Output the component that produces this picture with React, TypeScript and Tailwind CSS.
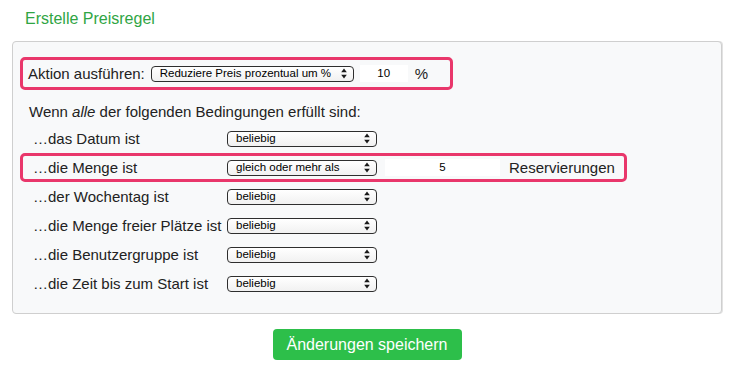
const Arrows = () => (
  <svg width="6" height="11" viewBox="0 0 6 11" className="shrink-0">
    <path d="M3 0.5 L5.8 4.3 H0.2 Z" fill="#1a1a1a" />
    <path d="M3 10.5 L5.8 6.7 H0.2 Z" fill="#1a1a1a" />
  </svg>
);

const SelectBox = ({ value, className = "" }: { value: string; className?: string }) => (
  <div
    className={`flex h-[16px] items-center justify-between rounded-[4px] border border-[#2e2e2e] bg-gradient-to-b from-white to-[#f1f1f1] pl-[8px] pr-[6px] text-[11.5px] leading-none text-black ${className}`}
  >
    <span>{value}</span>
    <Arrows />
  </div>
);

const conditions = [
  { label: "…das Datum ist", value: "beliebig" },
  { label: "…die Menge ist", value: "gleich oder mehr als", highlight: true },
  { label: "…der Wochentag ist", value: "beliebig" },
  { label: "…die Menge freier Plätze ist", value: "beliebig" },
  { label: "…die Benutzergruppe ist", value: "beliebig" },
  { label: "…die Zeit bis zum Start ist", value: "beliebig" },
];

export default function App() {
  return (
    <div
      className="min-h-[372px] w-[736px] bg-white pl-[12px] pr-[14px] text-[#222]"
      style={{ fontFamily: '"Liberation Sans", Arial, sans-serif' }}
    >
      <h1 className="pl-[13px] pt-[9px] text-[16px] leading-[20px] font-normal text-[#2fa544]">
        Erstelle Preisregel
      </h1>

      <div className="mt-[12px] rounded-[4px] border border-[#cfcfcf] bg-[#f8f9fa] px-[7px] pb-[15px] pt-[15px] shadow-[1px_0_0_#e2e2e2]">
        <div className="flex h-[33px] w-[433px] items-center rounded-[5px] border-[3px] border-[#e9376b] pl-[5px]">
          <span className="text-[15px] leading-none">Aktion ausführen:</span>
          <SelectBox value="Reduziere Preis prozentual um %" className="ml-[6px] w-[203px]" />
          <div className="ml-[6px] flex h-[17px] w-[48px] items-center justify-center bg-white text-[11.5px] text-black">
            10
          </div>
          <span className="ml-[7px] text-[15px] leading-none">%</span>
        </div>

        <p className="ml-[9px] mt-[12px] text-[15px] leading-[20px]">
          Wenn <em>alle</em> der folgenden Bedingungen erfüllt sind:
        </p>

        <div className="mt-[2px] flex flex-col">
          {conditions.map((c) => (
            <div
              key={c.label}
              className={`flex h-[29px] items-center rounded-[5px] border-[3px] pl-[10px] ${
                c.highlight ? "w-[607px] border-[#e9376b]" : "border-transparent"
              }`}
            >
              <span className="w-[194px] shrink-0 whitespace-nowrap text-[15px] leading-none">
                {c.label}
              </span>
              <SelectBox value={c.value} className="w-[150px] shrink-0" />
              {c.highlight && (
                <>
                  <div className="ml-[8px] flex h-[17px] w-[115px] items-center justify-center bg-white text-[11.5px] text-black">
                    5
                  </div>
                  <span className="ml-[9px] text-[15px] leading-none">Reservierungen</span>
                </>
              )}
            </div>
          ))}
        </div>
      </div>

      <div className="mt-[15px] flex justify-center">
        <button className="h-[31px] w-[189px] rounded-[4px] bg-[#2dbf4a] text-[16px] text-white">
          Änderungen speichern
        </button>
      </div>
    </div>
  );
}
